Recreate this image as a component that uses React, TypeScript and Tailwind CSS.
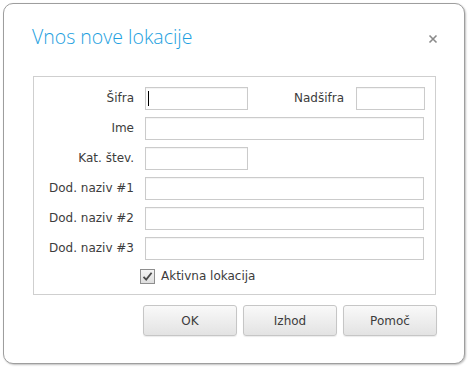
import React from "react";

const labelFont = { fontFamily: '"DejaVu Sans", Verdana, sans-serif' };

function Field({ w }: { w: string }) {
  return (
    <div
      className={`h-[23px] ${w} border border-[#cbcbcb] bg-white shadow-[inset_0_1px_1px_rgba(0,0,0,0.05)]`}
    />
  );
}

function Label({ children }: { children: React.ReactNode }) {
  return (
    <div className="w-[100px] shrink-0 text-right text-[12px] leading-[23px] text-[#3c3c3c]">
      {children}
    </div>
  );
}

function Btn({ children }: { children: React.ReactNode }) {
  return (
    <button className="h-[31px] w-[94px] rounded-[3px] border border-[#c6c6c6] bg-gradient-to-b from-[#f9f9f9] to-[#e3e3e3] text-[12px] text-[#3c3c3c] shadow-[0_1px_1px_rgba(0,0,0,0.08)]">
      {children}
    </button>
  );
}

export default function App() {
  return (
    <div className="h-[371px] w-[470px] bg-white p-[3px]" style={labelFont}>
      <div className="flex h-[361px] w-[462px] flex-col rounded-[10px] border border-[#9e9e9e] bg-white shadow-[1px_1px_2px_rgba(0,0,0,0.25)]">
        <div className="flex items-start justify-between pl-[28px] pr-[26px] pt-[20px]">
          <div
            className="text-[19.5px] font-light leading-[26px] text-[#1e9fe0]"
            style={{ fontFamily: '"Open Sans", sans-serif' }}
          >
            Vnos nove lokacije
          </div>
          <svg width="10" height="10" viewBox="0 0 10 10" className="mt-[10px]">
            <path d="M1.5 1.5 L8.5 8.5 M8.5 1.5 L1.5 8.5" stroke="#8a8a8a" strokeWidth="1.6" />
          </svg>
        </div>
        <div className="ml-[29px] mt-[26px] flex w-[403px] flex-col gap-[7px] border border-[#cfcfcf] pb-[10px] pr-[11px] pt-[10px]">
          <div className="flex items-center gap-[11px]">
            <Label>Šifra</Label>
            <div className="relative">
              <Field w="w-[103px]" />
              <div className="absolute left-[3px] top-[4px] h-[15px] w-px bg-black" />
            </div>
            <div className="ml-[35px] text-[12px] leading-[23px] text-[#3c3c3c]">Nadšifra</div>
            <div className="ml-[1px]">
              <Field w="w-[69px]" />
            </div>
          </div>
          <div className="flex items-center gap-[11px]">
            <Label>Ime</Label>
            <Field w="w-[280px]" />
          </div>
          <div className="flex items-center gap-[11px]">
            <Label>Kat. štev.</Label>
            <Field w="w-[103px]" />
          </div>
          <div className="flex items-center gap-[11px]">
            <Label>Dod. naziv #1</Label>
            <Field w="w-[280px]" />
          </div>
          <div className="flex items-center gap-[11px]">
            <Label>Dod. naziv #2</Label>
            <Field w="w-[280px]" />
          </div>
          <div className="flex items-center gap-[11px]">
            <Label>Dod. naziv #3</Label>
            <Field w="w-[280px]" />
          </div>
          <div className="mt-[2px] flex items-center gap-[6px] pl-[106px]">
            <div className="flex h-[15px] w-[15px] items-center justify-center border border-[#8e8e8e] bg-gradient-to-b from-[#f4f4f4] to-[#dedede]">
              <svg width="11" height="11" viewBox="0 0 11 11">
                <path d="M1.5 5.8 L4.2 8.6 L9.6 1.8" fill="none" stroke="#4a4a4a" strokeWidth="1.8" />
              </svg>
            </div>
            <span className="text-[12px] leading-[15px] text-[#3c3c3c]">Aktivna lokacija</span>
          </div>
        </div>
        <div className="ml-[139px] mt-[10px] flex gap-[6px]">
          <Btn>OK</Btn>
          <Btn>Izhod</Btn>
          <Btn>Pomoč</Btn>
        </div>
      </div>
    </div>
  );
}
